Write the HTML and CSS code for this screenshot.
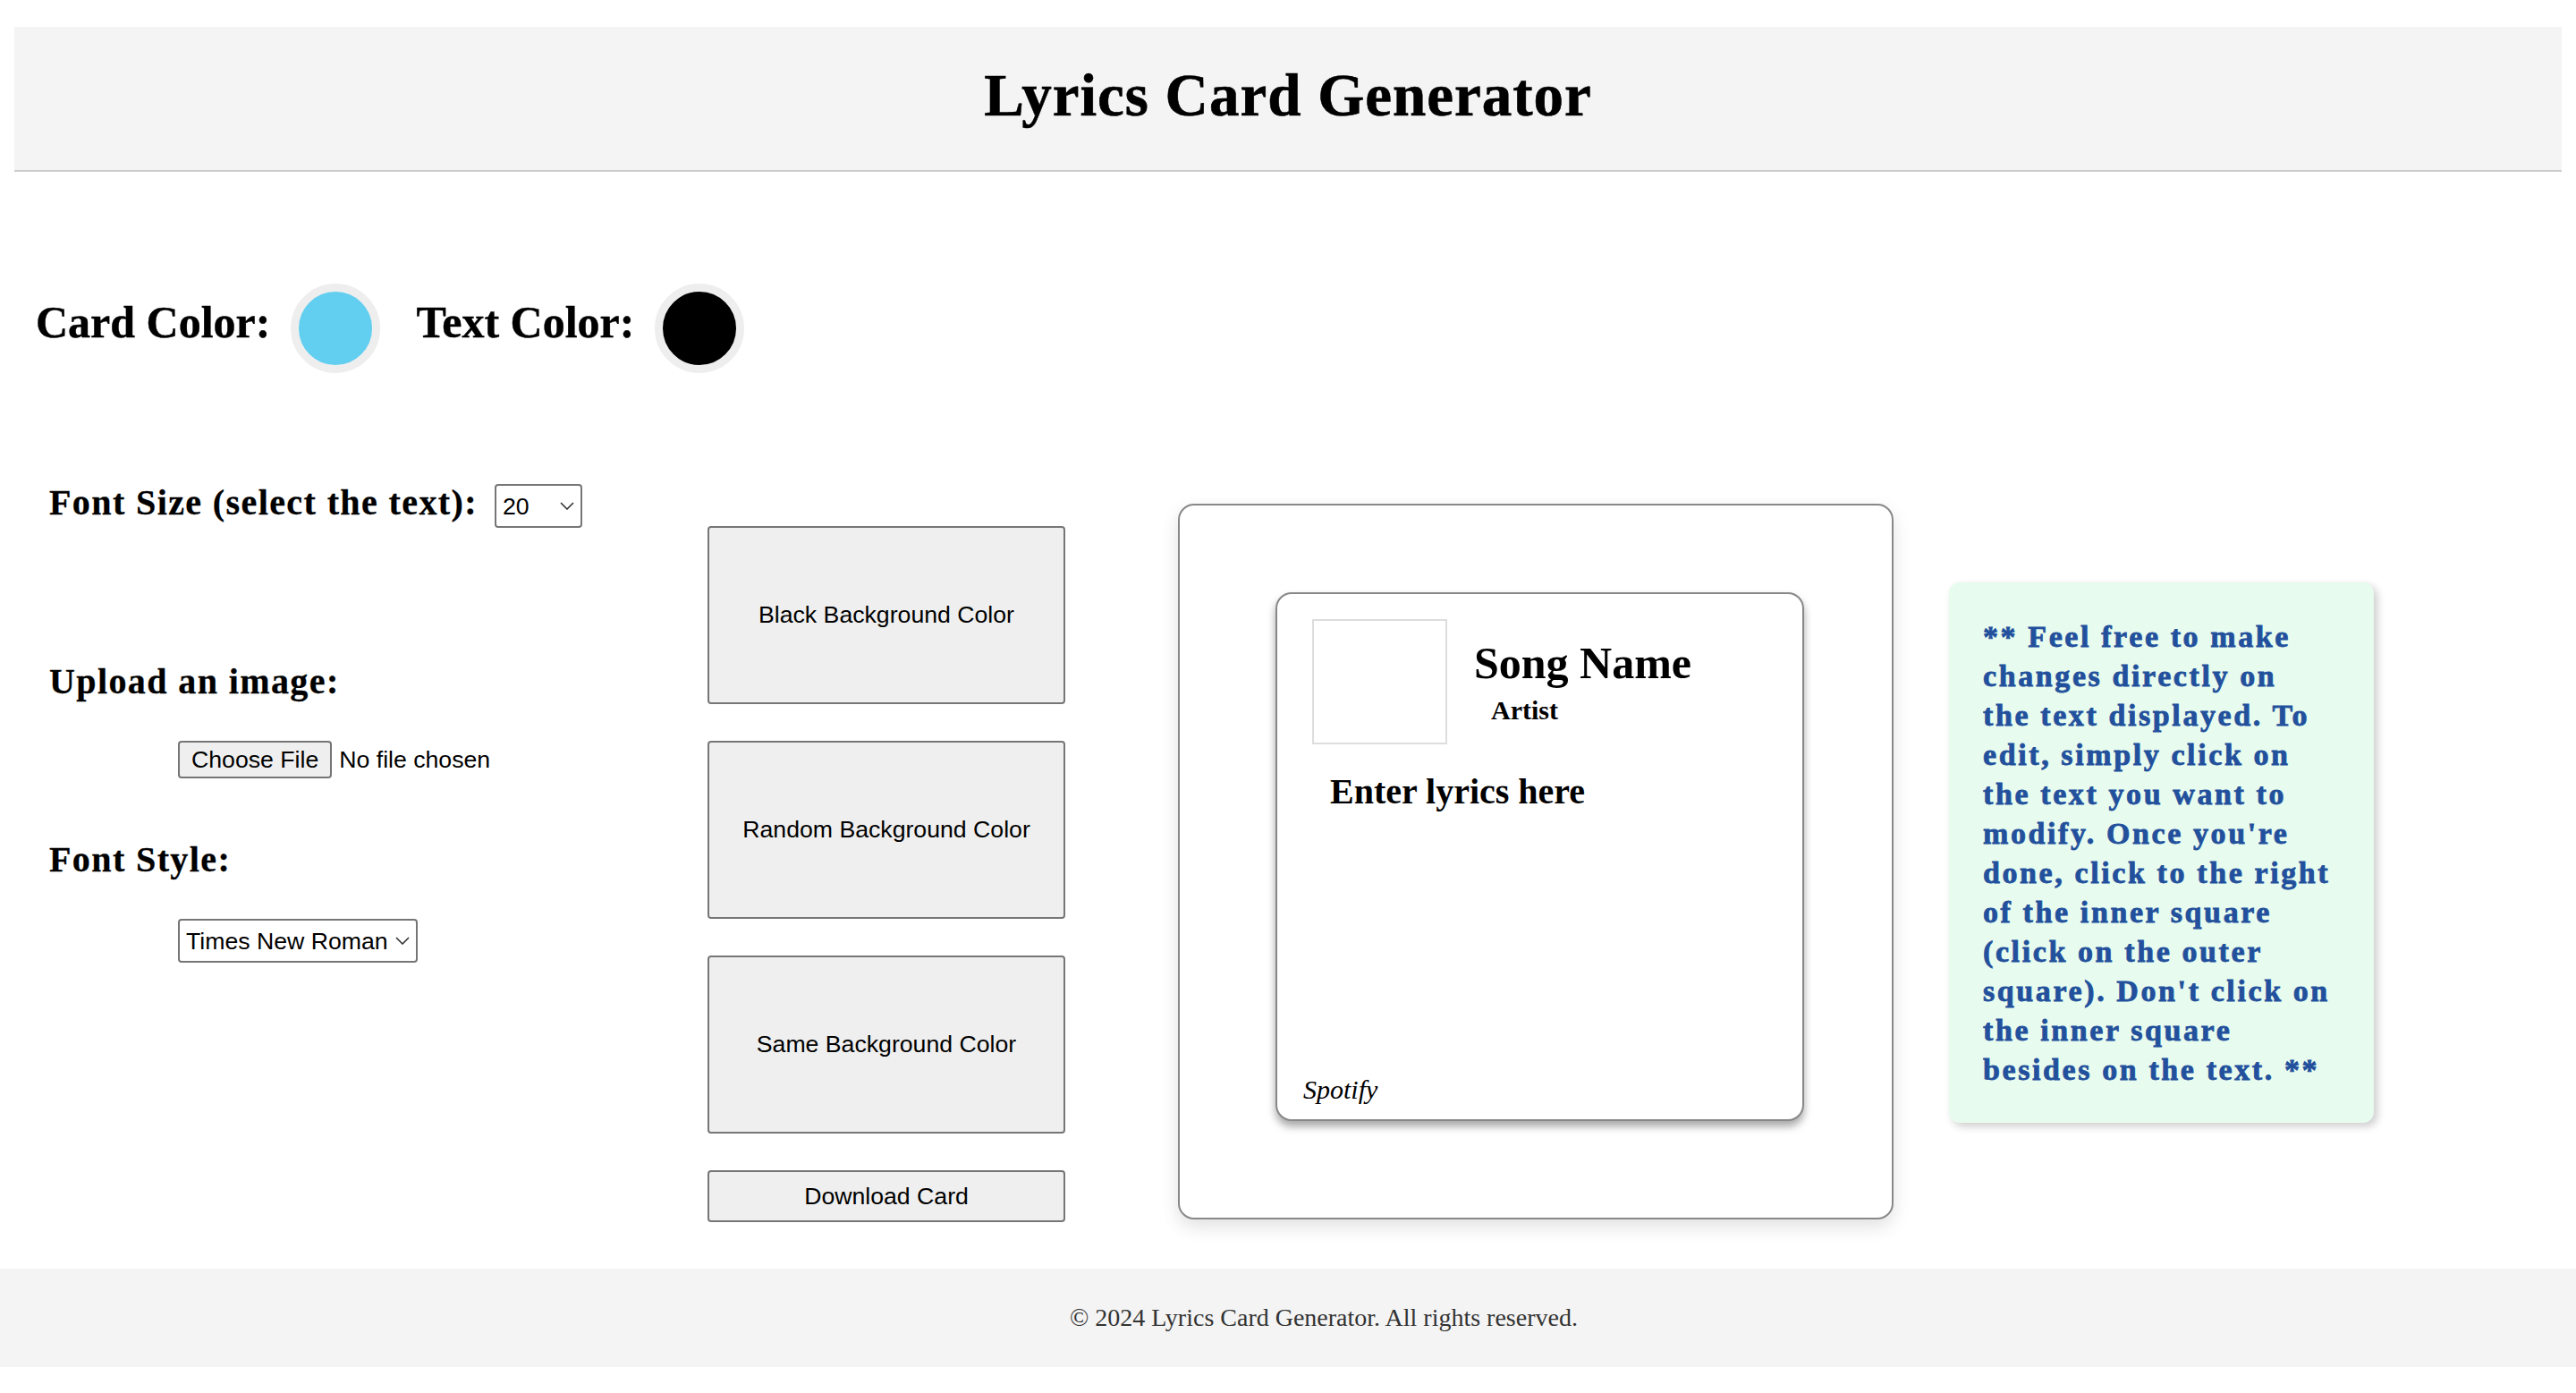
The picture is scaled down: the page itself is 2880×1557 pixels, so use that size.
FILE: index.html
```html
<!DOCTYPE html>
<html lang="en">
<head>
<meta charset="utf-8">
<title>Lyrics Card Generator</title>
<link rel="stylesheet" href="styles.css">
</head>
<body>
<header class="site-header">
  <h1 class="site-title">Lyrics Card Generator</h1>
</header>
<main>
  <section class="color-row">
    <span class="color-label">Card Color:</span>
    <span class="swatch swatch-card"></span>
    <span class="color-label">Text Color:</span>
    <span class="swatch swatch-text"></span>
  </section>

  <section class="workspace">
    <div class="controls">
      <div class="control-row">
        <label class="control-label size-label">Font Size (select the text):</label>
        <div class="select-wrap">
          <select class="select select-size"><option>20</option></select>
          <svg class="chevron" viewBox="0 0 16 9" width="16" height="9"><polyline points="1,1 8,8 15,1" fill="none" stroke="#333" stroke-width="1.6"/></svg>
        </div>
      </div>
      <label class="control-label upload-label">Upload an image:</label>
      <div class="file-row">
        <span class="file-btn">Choose File</span>
        <span class="file-status">No file chosen</span>
      </div>
      <label class="control-label style-label">Font Style:</label>
      <div class="select-wrap font-select-wrap">
        <select class="select select-font"><option>Times New Roman</option></select>
        <svg class="chevron" viewBox="0 0 16 9" width="16" height="9"><polyline points="1,1 8,8 15,1" fill="none" stroke="#333" stroke-width="1.6"/></svg>
      </div>
    </div>

    <div class="actions">
      <button class="action-btn">Black Background Color</button>
      <button class="action-btn">Random Background Color</button>
      <button class="action-btn">Same Background Color</button>
      <button class="action-btn download-btn">Download Card</button>
    </div>

    <div class="preview">
      <div class="card">
        <div class="card-head">
          <div class="art"></div>
          <div class="meta">
            <h2 class="song">Song Name</h2>
            <p class="artist">Artist</p>
          </div>
        </div>
        <p class="lyrics">Enter lyrics here</p>
        <p class="source">Spotify</p>
      </div>
    </div>

    <aside class="note">** Feel free to make<br>changes directly on<br>the text displayed. To<br>edit, simply click on<br>the text you want to<br>modify. Once you're<br>done, click to the right<br>of the inner square<br>(click on the outer<br>square). Don't click on<br>the inner square<br>besides on the text. **</aside>
  </section>
</main>
<footer class="site-footer">© 2024 Lyrics Card Generator. All rights reserved.</footer>
</body>
</html>
```

FILE: styles.css
```css
body {
  margin: 0;
  font-family: "Liberation Serif", "Times New Roman", serif;
  color: #000;
  background: #fff;
}

.site-header {
  margin: 30px 16px 0;
  background: #f4f4f4;
  border-bottom: 2px solid #cccccc;
  padding: 43px 0 50px;
  text-align: center;
}

.site-title {
  margin: 0;
  font-size: 67px;
  line-height: 67px;
  font-weight: 700;
  letter-spacing: 1px;
  -webkit-text-stroke: 0.6px #000;
}

.color-row {
  display: flex;
  align-items: flex-start;
  margin-top: 125px;
  padding-left: 40px;
  height: 100px;
}

.color-label {
  font-size: 50px;
  line-height: 50px;
  font-weight: 700;
  margin-top: 18px;
  -webkit-text-stroke: 0.4px #000;
}

.swatch {
  width: 100px;
  height: 100px;
  box-sizing: border-box;
  border-radius: 50%;
  border: 9px solid #eeeeee;
  margin-left: 23px;
}

.swatch-card {
  background: #62cff0;
  margin-right: 40px;
}

.swatch-text {
  background: #000;
}

.workspace {
  display: flex;
  align-items: flex-start;
  margin-top: 124px;
  padding-left: 55px;
}

.controls {
  width: 736px;
  display: flex;
  flex-direction: column;
  align-items: flex-start;
}

.control-label {
  font-size: 40px;
  line-height: 40px;
  font-weight: 700;
  letter-spacing: 1.4px;
  -webkit-text-stroke: 0.3px #000;
}

.control-row {
  display: flex;
  align-items: flex-start;
  height: 49px;
}

.size-label {
  margin-top: 1px;
  margin-right: 19px;
}

.upload-label {
  margin-top: 152px;
}

.file-row {
  margin-top: 46px;
  margin-left: 144px;
  display: flex;
  align-items: center;
  height: 42px;
  font-family: "Liberation Sans", Arial, sans-serif;
  font-size: 26.67px;
}

.file-btn {
  line-height: 30px;
  padding: 4px 13px;
  border: 2px solid #767676;
  border-radius: 4px;
  background: #efefef;
}

.file-status {
  margin-left: 8px;
}

.style-label {
  margin-top: 71px;
}

.select-wrap {
  position: relative;
  display: flex;
}

.font-select-wrap {
  margin-top: 46px;
  margin-left: 144px;
}

.select {
  appearance: none;
  -webkit-appearance: none;
  font-family: "Liberation Sans", Arial, sans-serif;
  font-size: 26.67px;
  color: #000;
  height: 49px;
  box-sizing: border-box;
  border: 2px solid #767676;
  border-radius: 4px;
  background: #fff;
  padding: 0 0 0 7px;
  margin: 0;
}

.select-size {
  width: 98px;
}

.select-font {
  width: 268px;
}

.chevron {
  position: absolute;
  right: 9px;
  top: 20px;
  pointer-events: none;
}

.actions {
  width: 400px;
  margin-top: 47px;
  margin-right: 126px;
  display: flex;
  flex-direction: column;
  gap: 41px;
}

.action-btn {
  font-family: "Liberation Sans", Arial, sans-serif;
  font-size: 26.67px;
  color: #000;
  background: #efefef;
  border: 2px solid #767676;
  border-radius: 4px;
  width: 400px;
  height: 199px;
  padding: 0;
  margin: 0;
}

.download-btn {
  height: 58px;
}

.preview {
  width: 800px;
  height: 800px;
  box-sizing: border-box;
  margin-top: 22px;
  margin-right: 62px;
  border: 2px solid #888;
  border-radius: 18px;
  background: #fff;
  box-shadow: 0 8px 20px rgba(0, 0, 0, 0.12);
  padding: 97px 0 0 107px;
}

.card {
  width: 591px;
  height: 591px;
  box-sizing: border-box;
  border: 2px solid #888;
  border-radius: 18px;
  background: #fff;
  box-shadow: 0 6px 10px rgba(0, 0, 0, 0.35);
  display: flex;
  flex-direction: column;
  padding: 28px 0 16px 29px;
}

.card-head {
  display: flex;
  align-items: center;
}

.art {
  width: 151px;
  height: 140px;
  box-sizing: border-box;
  border: 2px solid #dddddd;
  margin-left: 10px;
}

.meta {
  margin-left: 30px;
}

.song {
  margin: 0;
  font-size: 50px;
  line-height: 57px;
  font-weight: 700;
}

.artist {
  margin: 7px 0 0 19px;
  font-size: 30px;
  line-height: 34px;
  font-weight: 700;
}

.lyrics {
  margin: 30px 0 0 30px;
  font-size: 40px;
  line-height: 46px;
  font-weight: 700;
}

.source {
  margin: auto 0 0 0;
  font-size: 30px;
  line-height: 34px;
  font-style: italic;
}

.note {
  width: 475px;
  box-sizing: border-box;
  margin-top: 110px;
  background: #e7fbee;
  border-radius: 12px;
  box-shadow: 4px 4px 10px rgba(0, 0, 0, 0.2);
  padding: 39px 0 37px 38px;
  color: #22509c;
  font-size: 34px;
  line-height: 44px;
  font-weight: 700;
  letter-spacing: 2.6px;
  white-space: nowrap;
  -webkit-text-stroke: 0.8px #22509c;
}

.site-footer {
  margin-top: 52px;
  background: #f4f4f4;
  padding: 38px 0 38px 80px;
  text-align: center;
  font-size: 28px;
  line-height: 34px;
  color: #333;
}
```
